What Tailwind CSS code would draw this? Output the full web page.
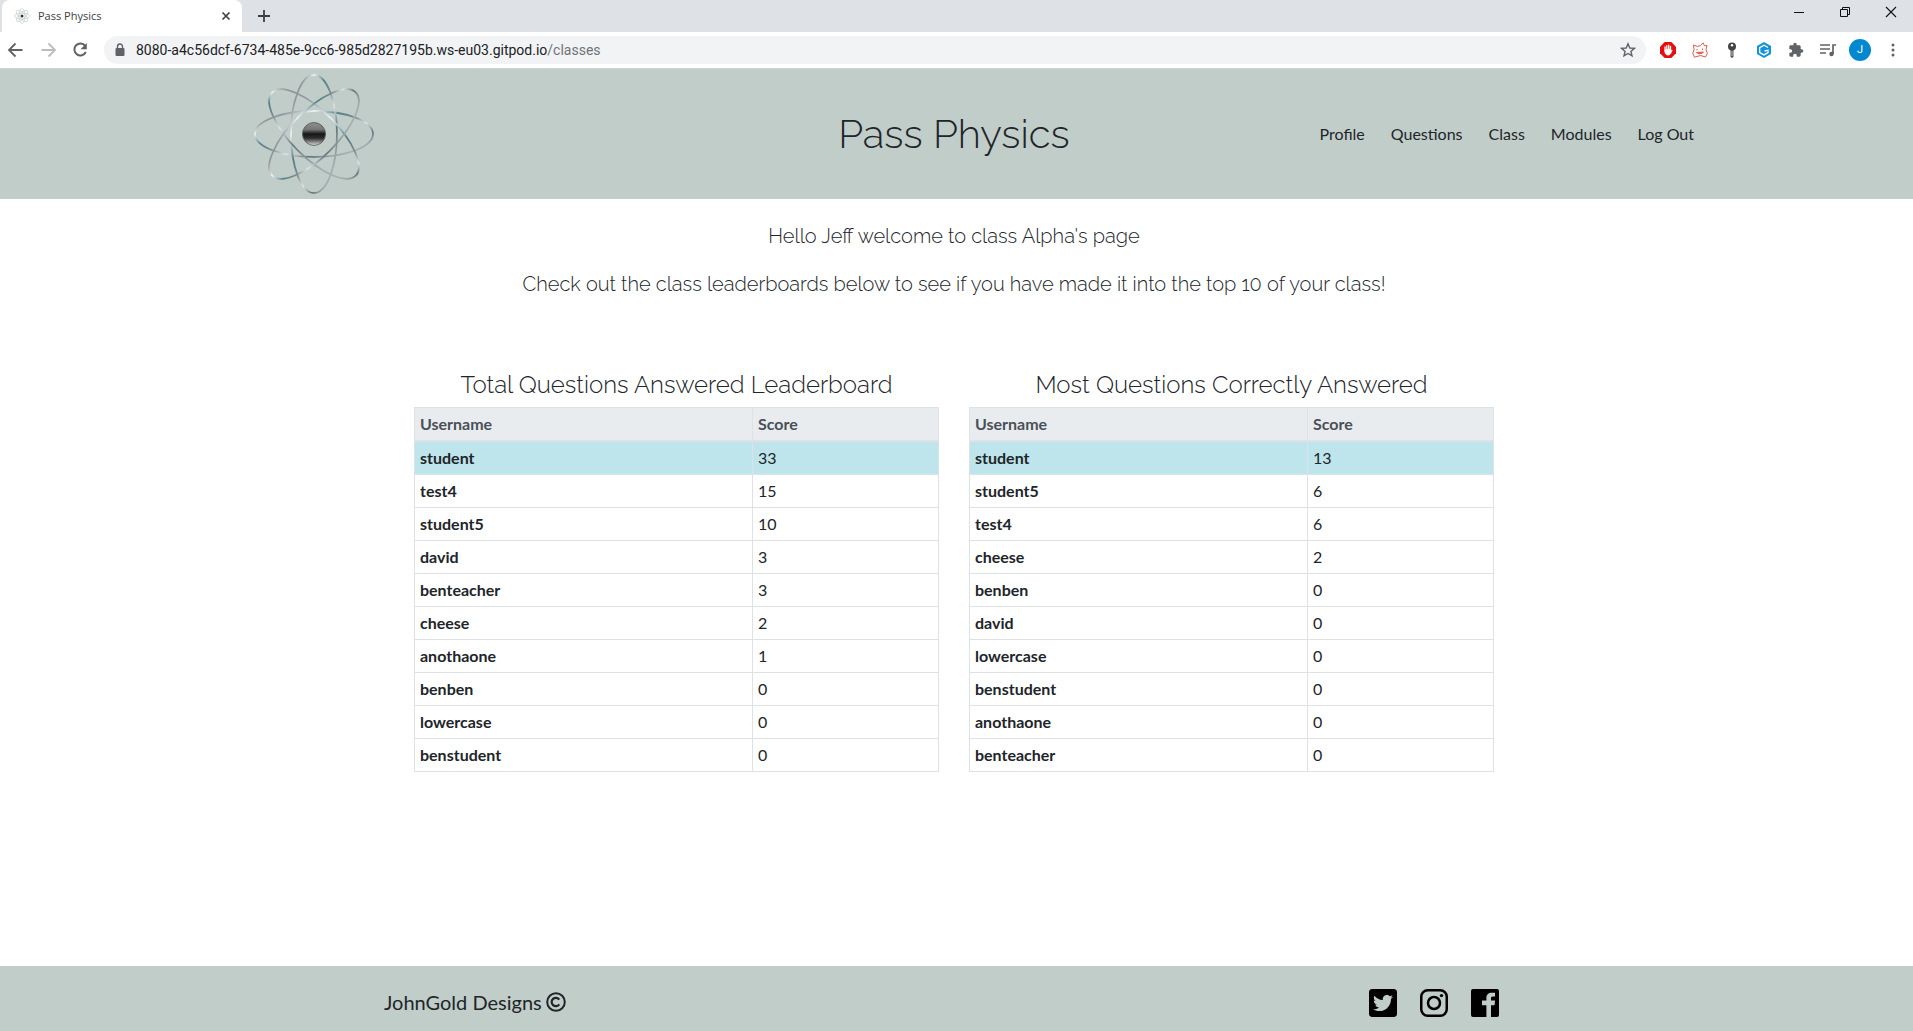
<!DOCTYPE html>
<html lang="en">
<head>
<meta charset="utf-8">
<title>Pass Physics</title>
<script src="https://cdn.jsdelivr.net/npm/@tailwindcss/browser@4"></script>
</head>
<body class="flex min-h-screen flex-col bg-white font-['Lato',sans-serif] text-base text-[#212529]">

<!-- Browser tab strip -->
<div class="flex h-8 items-stretch bg-[#dee1e6] font-['Open_Sans',sans-serif]">
  <div class="ml-0.5 flex w-60 items-center rounded-t-lg bg-white pr-2 pl-3 text-xs text-[#3c4043]">
    <svg class="mr-2 size-4" viewBox="0 0 16 16" fill="none" stroke="#b5bcbc" stroke-width=".5">
      <ellipse cx="8" cy="8" rx="7.5" ry="3"/><ellipse cx="8" cy="8" rx="3" ry="7.5"/>
      <ellipse cx="8" cy="8" rx="7.5" ry="3" transform="rotate(45 8 8)"/><ellipse cx="8" cy="8" rx="7.5" ry="3" transform="rotate(-45 8 8)"/>
      <circle cx="8" cy="8" r="1.5" fill="#333" stroke="none"/>
    </svg>
    <span class="flex-1 text-[11px]">Pass Physics</span>
    <button aria-label="Close tab"><svg class="size-4" viewBox="0 0 16 16" stroke="#3c4043" stroke-width="1.7"><path d="M4.5 4.500l7 7M11.500 4.500l-7 7"/></svg></button>
  </div>
  <button aria-label="New tab" class="ml-3.5"><svg class="size-4" viewBox="0 0 16 16" stroke="#3c4043" stroke-width="1.8"><path d="M2 8h12M8 2v12"/></svg></button>
  <div class="ml-auto flex items-center gap-7 pr-[13px] pb-2">
    <button aria-label="Minimise"><svg class="size-4.5" viewBox="0 0 18 18" stroke="#111"><path d="M4 9.500h10"/></svg></button>
    <button aria-label="Restore"><svg class="size-4.5" viewBox="0 0 18 18" fill="none" stroke="#111"><path d="M4.500 6.500h7v7h-7zM6.500 6.500v-2h7v7h-2"/></svg></button>
    <button aria-label="Close window"><svg class="size-4.5" viewBox="0 0 18 18" stroke="#111" stroke-width="1.1"><path d="M4 4l10 10M14 4L4 14"/></svg></button>
  </div>
</div>

<!-- Browser toolbar -->
<div class="flex h-[37px] items-center border-b border-[#cfd1d4] bg-white pr-3 pl-1.5">
  <button aria-label="Back"><svg class="size-5" viewBox="0 0 20 20" fill="none" stroke="#5f6368" stroke-width="1.8"><path d="M16.500 10H3M9.500 3.500L3 10l6.500 6.500"/></svg></button>
  <button aria-label="Forward" class="ml-3"><svg class="size-5" viewBox="0 0 20 20" fill="none" stroke="#babcbe" stroke-width="1.8"><path d="M3.500 10H17M10.500 3.500L17 10l-6.500 6.500"/></svg></button>
  <button aria-label="Reload" class="ml-3"><svg class="size-5" viewBox="0 0 20 20"><path d="M15.200 5.800A6 6 0 1 0 15.800 12" fill="none" stroke="#5f6368" stroke-width="2"/><path d="M16.800 3v6.300h-6.300z" fill="#5f6368"/></svg></button>
  <div class="mr-3.5 ml-3.5 flex h-7 flex-1 items-center rounded-full bg-[#f1f3f4] pr-2.5 pl-2">
    <svg class="size-4" viewBox="0 0 16 16"><rect x="3.500" y="6" width="9" height="8" rx="1" fill="#5f6368"/><path d="M5.500 6V4.500a2.500 2.500 0 0 1 5 0V6" fill="none" stroke="#5f6368" stroke-width="1.400"/></svg>
    <div class="ml-2 flex-1 font-['Roboto',sans-serif] text-sm text-[#202124]">8080-a4c56dcf-6734-485e-9cc6-985d2827195b.ws-eu03.gitpod.io<span class="text-[#6f7377]">/classes</span></div>
    <button aria-label="Bookmark"><svg class="size-4" viewBox="0 0 16 16" fill="none" stroke="#5f6368" stroke-width="1.400"><path d="M8 1.800l1.800 4.200 4.600.4-3.500 3 1.100 4.500L8 11.500l-4 2.400 1.100-4.500-3.500-3 4.600-.4z"/></svg></button>
  </div>
  <div class="flex items-center gap-4">
    <button aria-label="Ad blocker"><svg class="size-4" viewBox="0 0 16 16"><path d="M4.700 0h6.600L16 4.700v6.600L11.300 16H4.700L0 11.300V4.700z" fill="#e60f0f"/><path d="M5 8v2c0 1.800 1.200 3 3 3 1.700 0 2.400-.8 3-2.200l1.200-2.600-1.200.3-.6 1V7z" fill="#fff" stroke="#fff" stroke-width=".8" stroke-linejoin="round"/><path d="M5 5v4M6.800 3.600V9M8.700 3.200V9M10.500 4.400V9" stroke="#fff" stroke-width="1.300" stroke-linecap="round"/></svg></button>
    <button aria-label="Cat extension"><svg class="size-4" viewBox="0 0 16 16" fill="none" stroke="#e2574c" stroke-width="1"><path d="M1.500 3l4 1.500 3-1L11 .8l1.500 3 2.500-.3-1 4 1.300 4L13.500 15l-5-1.500-6 1.700L.8 11.500l1.200-4z"/><path d="M5 7v1.500M10.500 6.500V8M4.500 10.500c2 2 5.500 1.500 7-.5z" fill="#e2574c"/></svg></button>
    <button aria-label="Key manager"><svg class="size-4" viewBox="0 0 16 16"><circle cx="8" cy="4.500" r="4" fill="#444"/><circle cx="8" cy="3.300" r="1.200" fill="#fff"/><path d="M6.500 8h3v7L8 16l-1.500-1z" fill="#555"/><path d="M8 9v5" stroke="#ddd" stroke-width=".8"/></svg></button>
    <button aria-label="Gitpod"><svg class="size-4" viewBox="0 0 16 16"><path d="M8 0l7 4v8l-7 4-7-4V4z" fill="#1493d6"/><path d="M12 5.500L8 3.200 3.700 5.600v4.900L8 12.900l4-2.300V8.200L8.500 9" fill="none" stroke="#fff" stroke-width="1.300"/></svg></button>
    <button aria-label="Extensions"><svg class="size-4" viewBox="0 0 24 24" fill="#5f6368"><path d="M20.500 11H19V7c0-1.100-.9-2-2-2h-4V3.500a2.500 2.500 0 0 0-5 0V5H4c-1.100 0-2 .9-2 2v3.800h1.500a2.700 2.700 0 0 1 0 5.400H2V20c0 1.100.9 2 2 2h3.800v-1.500a2.700 2.700 0 0 1 5.400 0V22H17c1.100 0 2-.9 2-2v-4h1.500a2.500 2.500 0 0 0 0-5z"/></svg></button>
    <button aria-label="Media controls"><svg class="size-4" viewBox="0 0 16 16" fill="none" stroke="#5f6368" stroke-width="1.700"><path d="M0 3h10M0 7h10M0 11h6M13 12V3h3"/><circle cx="11.500" cy="12" r="2.200" fill="#5f6368" stroke="none"/></svg></button>
    <button aria-label="Account" class="-mr-0.5 -ml-[3px] size-[22px] rounded-full bg-[#0288d1] font-['Roboto',sans-serif] text-[11px] text-white">J</button>
    <button aria-label="Menu"><svg class="size-4" viewBox="0 0 16 16" fill="#5f6368"><circle cx="8" cy="3" r="1.500"/><circle cx="8" cy="8" r="1.500"/><circle cx="8" cy="13" r="1.500"/></svg></button>
  </div>
</div>

<!-- Site header -->
<header class="bg-[#c1cdc9] pr-[5px]">
  <div class="mx-auto grid h-[130px] max-w-[1480px] grid-cols-[1fr_auto_1fr] items-center">
    <a href="#" aria-label="Home" class="justify-self-start pl-10">
      <svg class="size-30" viewBox="0 0 120 120" fill="none" stroke-width="1.800">
        <defs>
          <linearGradient id="metal" x1="0" y1="0" x2="1" y2="1">
            <stop offset="0" stop-color="#8b9299"/><stop offset=".15" stop-color="#8f969b"/><stop offset=".25" stop-color="#edf1f1"/><stop offset=".38" stop-color="#54808a"/><stop offset=".5" stop-color="#7e8c8e"/><stop offset=".6" stop-color="#dfe6e6"/><stop offset=".72" stop-color="#67777c"/><stop offset=".85" stop-color="#a5b2b3"/><stop offset="1" stop-color="#6d7b88"/>
          </linearGradient>
          <linearGradient id="core" x1="0" y1="0" x2="0" y2="1">
            <stop offset="0" stop-color="#8f8f8f"/><stop offset=".3" stop-color="#777"/><stop offset=".5" stop-color="#161616"/><stop offset=".68" stop-color="#2e2e2e"/><stop offset="1" stop-color="#dcdcdc"/>
          </linearGradient>
        </defs>
        <g stroke="url(#metal)">
          <ellipse cx="60" cy="60" rx="59" ry="23"/>
          <ellipse cx="60" cy="60" rx="23" ry="59"/>
          <ellipse cx="60" cy="60" rx="59" ry="23" transform="rotate(45 60 60)"/>
          <ellipse cx="60" cy="60" rx="59" ry="23" transform="rotate(-45 60 60)"/>
        </g>
        <circle cx="60" cy="60" r="11.500" fill="url(#core)" stroke="#555" stroke-width=".8"/>
      </svg>
    </a>
    <h1 class="font-['Raleway','Inter',sans-serif] text-[40px] leading-12 font-light">Pass Physics</h1>
    <nav class="flex gap-[26px] justify-self-end">
      <a href="#">Profile</a><a href="#">Questions</a><a href="#">Class</a><a href="#">Modules</a><a href="#">Log Out</a>
    </nav>
  </div>
</header>

<main class="flex-1 pr-[5px]">
  <div class="mx-auto max-w-[1140px]">
    <div class="flex flex-col gap-6 pt-[25px] text-center font-['Raleway','Inter',sans-serif] text-[20px] leading-6 font-light">
      <p>Hello Jeff welcome to class Alpha's page</p>
      <p>Check out the class leaderboards below to see if you have made it into the top 10 of your class!</p>
    </div>
    <div class="grid grid-cols-2 gap-[30px] px-[30px] pt-[75px]">
      <section>
        <h2 class="mb-2 text-center font-['Raleway','Inter',sans-serif] text-2xl leading-7 font-light">Total Questions Answered Leaderboard</h2>
        <table class="w-full table-fixed border-collapse border border-[#dee2e6] text-left leading-6 [&_td]:border [&_td]:border-[#dee2e6] [&_td]:px-[5px] [&_td]:py-1 [&_th]:border [&_th]:border-[#dee2e6] [&_th]:px-[5px] [&_th]:py-1">
          <thead class="bg-[#e9ecef] text-[#495057]"><tr class="border-b-2 border-[#dee2e6]"><th scope="col" class="w-[338px]">Username</th><th scope="col">Score</th></tr></thead>
          <tbody>
            <tr class="bg-[#bee5eb]"><th scope="row">student</th><td>33</td></tr>
            <tr><th scope="row">test4</th><td>15</td></tr>
            <tr><th scope="row">student5</th><td>10</td></tr>
            <tr><th scope="row">david</th><td>3</td></tr>
            <tr><th scope="row">benteacher</th><td>3</td></tr>
            <tr><th scope="row">cheese</th><td>2</td></tr>
            <tr><th scope="row">anothaone</th><td>1</td></tr>
            <tr><th scope="row">benben</th><td>0</td></tr>
            <tr><th scope="row">lowercase</th><td>0</td></tr>
            <tr><th scope="row">benstudent</th><td>0</td></tr>
          </tbody>
        </table>
      </section>
      <section>
        <h2 class="mb-2 text-center font-['Raleway','Inter',sans-serif] text-2xl leading-7 font-light">Most Questions Correctly Answered</h2>
        <table class="w-full table-fixed border-collapse border border-[#dee2e6] text-left leading-6 [&_td]:border [&_td]:border-[#dee2e6] [&_td]:px-[5px] [&_td]:py-1 [&_th]:border [&_th]:border-[#dee2e6] [&_th]:px-[5px] [&_th]:py-1">
          <thead class="bg-[#e9ecef] text-[#495057]"><tr class="border-b-2 border-[#dee2e6]"><th scope="col" class="w-[338px]">Username</th><th scope="col">Score</th></tr></thead>
          <tbody>
            <tr class="bg-[#bee5eb]"><th scope="row">student</th><td>13</td></tr>
            <tr><th scope="row">student5</th><td>6</td></tr>
            <tr><th scope="row">test4</th><td>6</td></tr>
            <tr><th scope="row">cheese</th><td>2</td></tr>
            <tr><th scope="row">benben</th><td>0</td></tr>
            <tr><th scope="row">david</th><td>0</td></tr>
            <tr><th scope="row">lowercase</th><td>0</td></tr>
            <tr><th scope="row">benstudent</th><td>0</td></tr>
            <tr><th scope="row">anothaone</th><td>0</td></tr>
            <tr><th scope="row">benteacher</th><td>0</td></tr>
          </tbody>
        </table>
      </section>
    </div>
  </div>
</main>

<footer class="bg-[#c1cdc9] pr-[5px]">
  <div class="mx-auto flex h-[65px] max-w-[1140px] items-center justify-between pt-2 pr-[25px]">
    <p class="flex items-center gap-1 pb-0.5 text-[20px] leading-7">JohnGold Designs
      <svg class="size-5" viewBox="0 0 20 20" fill="none" stroke="#212529" role="img" aria-label="copyright"><circle cx="10" cy="10" r="8.800" stroke-width="2"/><path d="M13.300 12.400a4.200 4.200 0 1 1 0-4.800" stroke-width="2.200"/></svg>
    </p>
    <div class="flex gap-[23px]">
      <a href="#" aria-label="Twitter"><svg class="size-7" viewBox="0 32 448 448"><path d="M400 32H48C21.500 32 0 53.500 0 80v352c0 26.500 21.500 48 48 48h352c26.500 0 48-21.500 48-48V80c0-26.500-21.500-48-48-48zm-48.900 158.800c.2 2.800.2 5.700.2 8.500 0 86.700-66 186.600-186.600 186.600-37.200 0-71.700-10.800-100.700-29.400 5.300.6 10.400.8 15.800.8 30.700 0 58.900-10.400 81.400-28-28.800-.6-53-19.500-61.300-45.500 10.100 1.500 19.200 1.500 29.600-1.200-30-6.100-52.500-32.500-52.500-64.400v-.8c8.700 4.900 18.900 7.900 29.600 8.300a65.447 65.447 0 0 1-29.200-54.600c0-12.200 3.200-23.400 8.900-33.100 32.300 39.800 80.800 65.800 135.200 68.600-9.300-44.500 24-80.600 64-80.600 18.900 0 35.900 7.900 47.900 20.700 14.800-2.800 29-8.300 41.600-15.800-4.900 15.200-15.200 28-28.800 36.100 13.200-1.400 26-5.100 37.800-10.200-8.900 13.100-20.100 24.700-32.900 34z"/></svg></a>
      <a href="#" aria-label="Instagram"><svg class="size-7" viewBox="0 0 28 28" fill="none" stroke="#000" stroke-width="2.500"><rect x="1.250" y="1.250" width="25.500" height="25.500" rx="6.500"/><circle cx="14" cy="14" r="6"/><circle cx="21.500" cy="6.600" r="1.700" fill="#000" stroke="none"/></svg></a>
      <a href="#" aria-label="Facebook"><svg class="size-7" viewBox="0 0 28 28"><path fill-rule="evenodd" d="M2 0h24a2 2 0 0 1 2 2v24a2 2 0 0 1-2 2h-6V16.200h3.500l.6-4.700H20V9.300c0-1.200.4-1.900 1.900-1.900H24V3.700h-3.300c-3.400 0-5.300 2-5.300 5.200v2.600H11v4.700h4.400V28H2a2 2 0 0 1-2-2V2a2 2 0 0 1 2-2z"/></svg></a>
    </div>
  </div>
</footer>
</body>
</html>
